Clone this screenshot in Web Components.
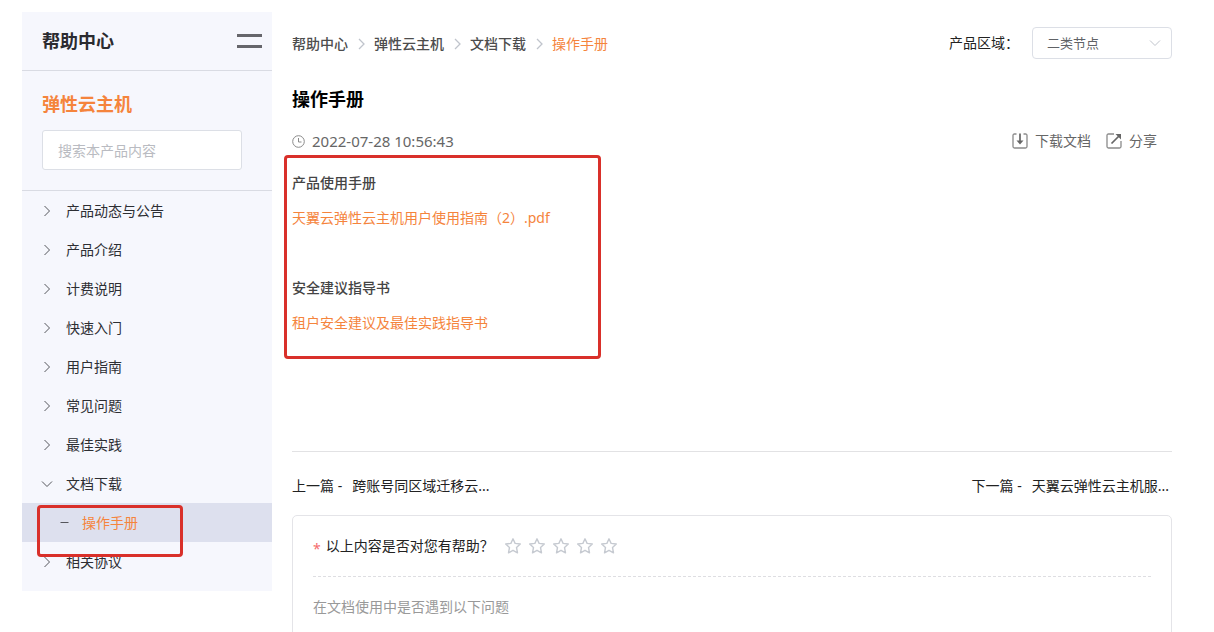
<!DOCTYPE html>
<html lang="zh-CN">
<head>
<meta charset="utf-8">
<title>操作手册 - 帮助中心</title>
<style>
  html { scrollbar-width: none; }
  body {
    margin: 0;
    background: #fff;
    color: #222;
    font: 14px/20px "Noto Sans", "Noto Sans CJK SC", sans-serif;
  }
</style>
</head>
<body>
<help-page>
  <side-panel slot="side" heading="帮助中心" product="弹性云主机">
    <tree-item>产品动态与公告</tree-item>
    <tree-item>产品介绍</tree-item>
    <tree-item>计费说明</tree-item>
    <tree-item>快速入门</tree-item>
    <tree-item>用户指南</tree-item>
    <tree-item>常见问题</tree-item>
    <tree-item>最佳实践</tree-item>
    <tree-item open>文档下载</tree-item>
    <tree-item leaf>操作手册</tree-item>
    <tree-item>相关协议</tree-item>
  </side-panel>
  <top-bar></top-bar>
  <doc-head date="2022-07-28 10:56:43">操作手册</doc-head>
  <doc-body>
    <doc-section heading="产品使用手册">天翼云弹性云主机用户使用指南（2）.pdf</doc-section>
    <doc-section heading="安全建议指导书">租户安全建议及最佳实践指导书</doc-section>
  </doc-body>
  <doc-pager></doc-pager>
  <feedback-card></feedback-card>
</help-page>

<script>
const define = (name, css, html, setup) => {
  const template = document.createElement('template');
  template.innerHTML = `<style>*{box-sizing:border-box}${css}</style>${html}`;
  customElements.define(name, class extends HTMLElement {
    constructor() {
      super();
      this.attachShadow({ mode: 'open' }).append(template.content.cloneNode(true));
    }
    connectedCallback() {
      if (setup) setup(this, this.shadowRoot);
    }
  });
};

define('help-page', `
  :host { display: grid; grid-template-columns: 250px minmax(0, 1fr); column-gap: 20px;
    align-items: start; padding: 12px 42px 0 22px; }
  main { display: block; padding-top: 15px; }
`, `<slot name="side"></slot><main><slot></slot></main>`);

define('side-panel', `
  :host { display: block; background: #f6f7fd; padding-bottom: 10px; }
  header { display: flex; align-items: center; justify-content: space-between; height: 59px;
    padding: 0 10px 0 20px; border-bottom: 1px solid #d9dbe3; }
  h2, h3 { margin: 0; font-size: 18px; line-height: 24px; font-weight: 700; }
  h2 { color: #2b2b30; }
  h3 { color: #f5843c; }
  button { display: block; padding: 0; border: 0; background: none; }
  button svg { display: block; }
  .search { display: grid; gap: 14px; padding: 21px 30px 20px 20px; border-bottom: 1px solid #d9dbe3; }
  input { width: 100%; height: 40px; padding: 0 15px; border: 1px solid #dcdfe6; border-radius: 3px;
    background: #fff; font: inherit; color: #333; outline: 0; }
  input::placeholder { color: #b9bbc1; opacity: 1; }
`, `
  <header><h2></h2>
    <button type="button" aria-label="收起菜单"><svg width="25" height="14" fill="#66666b"><path d="M0 0h25v3H0zM0 11h25v3H0z"/></svg></button>
  </header>
  <div class="search"><h3></h3><input type="text" aria-label="搜索本产品内容" placeholder="搜索本产品内容"></div>
  <nav><slot></slot></nav>
`, (host, root) => {
  root.querySelector('h2').textContent = host.getAttribute('heading');
  root.querySelector('h3').textContent = host.getAttribute('product');
});

define('tree-item', `
  :host { display: block; position: relative; }
  a { display: flex; align-items: center; gap: 12px; height: 39px; padding-left: 18px;
    color: #2d2e33; text-decoration: none; }
  svg { fill: none; stroke: #55565c; display: none; }
  .mark { display: none; }
  :host(:not([open]):not([leaf])) .shut, :host([open]) .down, :host([leaf]) .dash { display: block; }
  :host([leaf]) a { padding-left: 34px; background: #dde0ee; color: #f5843c; }
  :host([leaf]) .mark { display: block; position: absolute; z-index: 1; left: 15px; top: 2px;
    width: 146px; height: 52px; border: 3px solid #d9302a; border-radius: 4px; pointer-events: none; }
`, `
  <a href="#">
    <svg class="shut" width="14" height="14"><path d="M4.500 2l5 5-5 5"/></svg>
    <svg class="down" width="14" height="14"><path d="M2 4.500l5 5 5-5"/></svg>
    <svg class="dash" width="14" height="14"><path d="M4.500 6.500h8"/></svg>
    <span><slot></slot></span>
  </a>
  <div class="mark"></div>
`);

define('top-bar', `
  :host { display: flex; align-items: center; justify-content: space-between; height: 32px; }
  nav { display: flex; align-items: center; gap: 8px; padding-top: 2px; }
  a { color: #4d4d4d; font-weight: 500; text-decoration: none; }
  a[aria-current] { color: #f5843c; font-weight: 400; }
  svg { fill: none; stroke: #c0c4cc; display: block; }
  nav svg { stroke-width: 1.3; }
  .region { display: flex; align-items: center; gap: 13px; color: #222; }
  .pick { display: grid; align-items: center; width: 140px; }
  .pick > * { grid-area: 1 / 1; }
  .pick svg { justify-self: end; margin-right: 10px; pointer-events: none; }
  select { appearance: none; width: 100%; height: 32px; padding: 0 14px; border: 1px solid #dcdfe6;
    border-radius: 4px; background: #fff; color: #606266; font: inherit; font-size: 13px; }
`, `
  <nav aria-label="面包屑">
    <a href="#">帮助中心</a><svg width="10" height="12"><path d="M3 1l5 5-5 5"/></svg>
    <a href="#">弹性云主机</a><svg width="10" height="12"><path d="M3 1l5 5-5 5"/></svg>
    <a href="#">文档下载</a><svg width="10" height="12"><path d="M3 1l5 5-5 5"/></svg>
    <a href="#" aria-current="page">操作手册</a>
  </nav>
  <div class="region"><label for="region">产品区域：</label>
    <div class="pick"><select id="region"><option>二类节点</option></select>
      <svg width="14" height="14"><path d="M2 4.500l5 5 5-5"/></svg></div>
  </div>
`);

define('doc-head', `
  :host { display: block; padding-top: 28px; }
  h1 { margin: 0 0 20px; color: #000; font-size: 18px; line-height: 24px; font-weight: 700; }
  .meta, .date, .tools, button { display: flex; align-items: center; }
  .meta { justify-content: space-between; color: #666; }
  .date { gap: 7px; }
  time { font-size: 15px; }
  .tools { gap: 15px; padding-right: 15px; }
  button { gap: 7px; padding: 0; border: 0; background: none; color: inherit; font: inherit; }
  svg { display: block; fill: none; stroke: #8a8a8a; }
`, `
  <h1><slot></slot></h1>
  <div class="meta">
    <div class="date"><svg width="13" height="13"><circle cx="6.500" cy="6.500" r="5.800"/><path d="M6.500 3v4h3"/></svg><time></time></div>
    <div class="tools">
      <button type="button"><svg width="16" height="16" stroke-width="1.300"><path d="M4.500 1H2.500Q1 1 1 2.500v11Q1 15 2.500 15h11q1.500 0 1.500-1.500v-11Q15 1 13.500 1h-2"/><path stroke="#666" stroke-width="1.700" d="M8 0.500v8"/><path stroke="none" fill="#666" d="M4.500 7.500h7L8 11.500z"/></svg>下载文档</button>
      <button type="button"><svg width="16" height="16" stroke-width="1.300"><path d="M8 1H2.500Q1 1 1 2.500v11Q1 15 2.500 15h11q1.500 0 1.500-1.500V8"/><path stroke="#666" stroke-width="1.700" d="M5.500 10.500L13 3"/><path stroke="none" fill="#666" d="M9.500 1H15v5.500z"/></svg>分享</button>
    </div>
  </div>
`, (host, root) => { root.querySelector('time').textContent = host.getAttribute('date'); });

define('doc-body', `
  :host { display: grid; gap: 35px; position: relative; padding: 14px 0 111px; border-bottom: 1px solid #e2e2e4; }
  .mark { position: absolute; left: -8px; top: 4px; width: 317px; height: 204px;
    border: 3px solid #d9302a; border-radius: 4px; pointer-events: none; }
`, `<slot></slot><div class="mark"></div>`);

define('doc-section', `
  :host { display: block; line-height: 35px; }
  h4 { margin: 0; font-size: 14px; font-weight: 500; color: #444; }
  a { display: block; color: #f5843c; text-decoration: none; }
`, `<h4></h4><a href="#"><slot></slot></a>`,
(host, root) => { root.querySelector('h4').textContent = host.getAttribute('heading'); });

define('doc-pager', `
  :host { display: flex; justify-content: space-between; padding: 24px 3px 19px 0; }
  a { display: flex; gap: 10px; color: #222; text-decoration: none; }
`, `
  <a href="#"><span>上一篇 -</span><span>跨账号同区域迁移云...</span></a>
  <a href="#"><span>下一篇 -</span><span>天翼云弹性云主机服...</span></a>
`);

define('feedback-card', `
  :host { display: block; padding: 20px 20px 60px; border: 1px solid #e4e4e8; border-radius: 5px; }
  fieldset { display: flex; align-items: center; gap: 11px; margin: 0; padding: 0 0 20px; border: 0;
    border-bottom: 1px dashed #dedee2; }
  .ask { display: flex; gap: 5px; color: #222; }
  .ask i { padding-top: 6px; line-height: 14px; color: #f56c6c; font-style: normal; }
  .stars { display: flex; gap: 8px; }
  .stars label { display: grid; }
  .stars label > * { grid-area: 1 / 1; }
  input { appearance: none; margin: 0; width: 16px; height: 16px; }
  svg { fill: none; stroke: #c6cad1; stroke-width: 1.4; stroke-linejoin: round; pointer-events: none; }
  p { margin: 20px 0 0; color: #999; }
`, `
  <fieldset aria-labelledby="ask">
    <div class="ask" id="ask"><i>*</i><span>以上内容是否对您有帮助？</span></div>
    <div class="stars"></div>
  </fieldset>
  <p>在文档使用中是否遇到以下问题</p>
`, (host, root) => {
  root.querySelector('.stars').innerHTML = [1, 2, 3, 4, 5].map(n =>
    `<label><input type="radio" name="rate" value="${n}" aria-label="${n} 星"><svg width="16" height="16"><path d="M8 .8l2.100 4.600 5.200.600-3.800 3.500 1 5.300L8 12.300l-4.500 2.500 1-5.300L.7 6l5.200-.6z"/></svg></label>`).join('');
});
</script>
</body>
</html>
